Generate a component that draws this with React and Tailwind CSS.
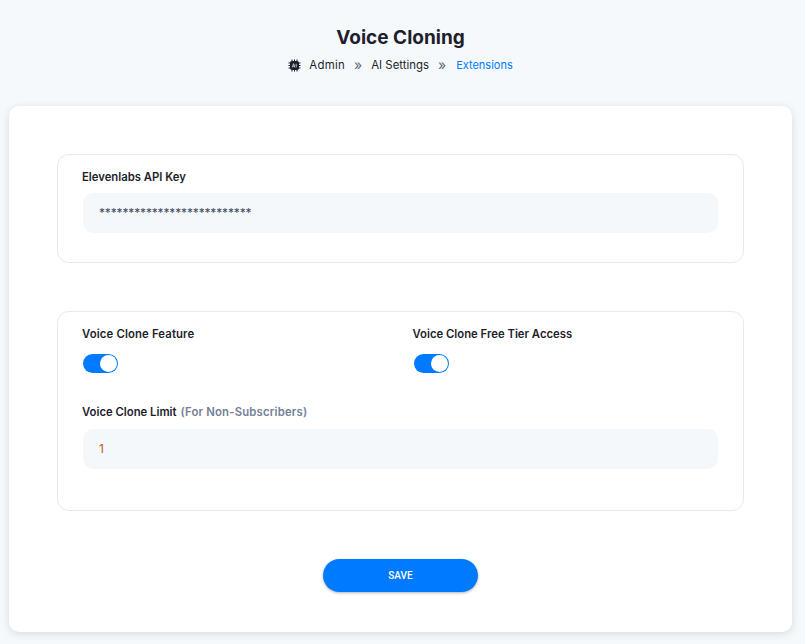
const FONT = "font-['Inter',sans-serif]";

const Toggle = () => (
  <div className="w-[35px] h-[19px] rounded-full bg-[#007bff] relative">
    <div className="absolute right-[1px] top-[1px] w-[17px] h-[17px] rounded-full bg-white"></div>
  </div>
);

const Chip = () => (
  <svg width="13" height="13" viewBox="0 0 13 13">
    <rect x="2" y="2" width="9" height="9" rx="2" fill="#1e1e2d" />
    <path d="M4 0.5v2M6.5 0.5v2M9 0.5v2M4 10.5v2M6.5 10.5v2M9 10.5v2M0.5 4h2M0.5 6.5h2M0.5 9h2M10.5 4h2M10.5 6.5h2M10.5 9h2" stroke="#1e1e2d" strokeWidth="1" />
    <path d="M4.4 8.4l1-3.6h.4l1 3.6M4.8 7.2h1.6M8.2 4.8v3.6" stroke="#fff" strokeWidth=".7" fill="none" />
  </svg>
);

const Sep = () => <span className="text-[14px] text-[#5f6b7a] mx-[9px]">»</span>;

const labelClass = "block -ml-[1px] text-[11.3px] leading-[16px] font-semibold text-[#1e1e2d]";
const inputClass = "h-[40px] rounded-[10px] bg-[#f5f8fb] px-[16px] flex items-center text-[12px]";

export default function App() {
  return (
    <div className={`${FONT} min-h-[644px] bg-[#f5f9fc] pl-[9px] pr-[13px] pt-[26px] pb-[12px]`}>
      <div className="text-center">
        <h1 className="text-[19px] leading-[24px] font-bold text-[#1e1e2d]">Voice Cloning</h1>
        <div className="mt-[6px] flex items-center justify-center text-[11.4px] leading-[18px] text-[#1e1e2d]">
          <Chip />
          <span className="ml-[8px] tracking-[0.3px]">Admin</span>
          <Sep />
          <span>AI Settings</span>
          <Sep />
          <span className="text-[#007bff] ml-[1px] text-[11px]">Extensions</span>
        </div>
      </div>

      <div className="mt-[32px] bg-white rounded-[10px] shadow-[0_2px_8px_rgba(0,0,0,0.12)] pt-[48px] px-[48px] pb-[40px] h-[526px]">
        <div className="border border-[#e6eaef] rounded-[12px] h-[109px] pt-[14px] px-[25px]">
          <label className={labelClass}>Elevenlabs API Key</label>
          <div className={`${inputClass} mt-[8px] text-[#3d4a5c] tracking-[-0.15px]`}>**************************</div>
        </div>

        <div className="mt-[48px] border border-[#e6eaef] rounded-[12px] h-[200px] pt-[14px] px-[25px]">
          <div className="grid grid-cols-2 gap-x-[24px]">
            <div>
              <label className={`${labelClass} tracking-[0.15px]`}>Voice Clone Feature</label>
              <div className="mt-[12px]"><Toggle /></div>
            </div>
            <div className="pl-[1px]">
              <label className={labelClass}>Voice Clone Free Tier Access</label>
              <div className="mt-[12px]"><Toggle /></div>
            </div>
          </div>
          <label className={`${labelClass} mt-[31px]`}>
            Voice Clone Limit <span className="text-[#728096] tracking-[0.2px] ml-[1px]">(For Non-Subscribers)</span>
          </label>
          <div className={`${inputClass} mt-[9px] text-[#b8630f]`}>1</div>
        </div>

        <div className="mt-[48px] flex justify-center">
          <button className="w-[155px] h-[33px] rounded-full bg-[#007bff] text-white text-[10px] font-medium font-['Roboto',sans-serif] shadow-[0_1px_3px_rgba(0,0,0,0.3)]">
            SAVE
          </button>
        </div>
      </div>
    </div>
  );
}
